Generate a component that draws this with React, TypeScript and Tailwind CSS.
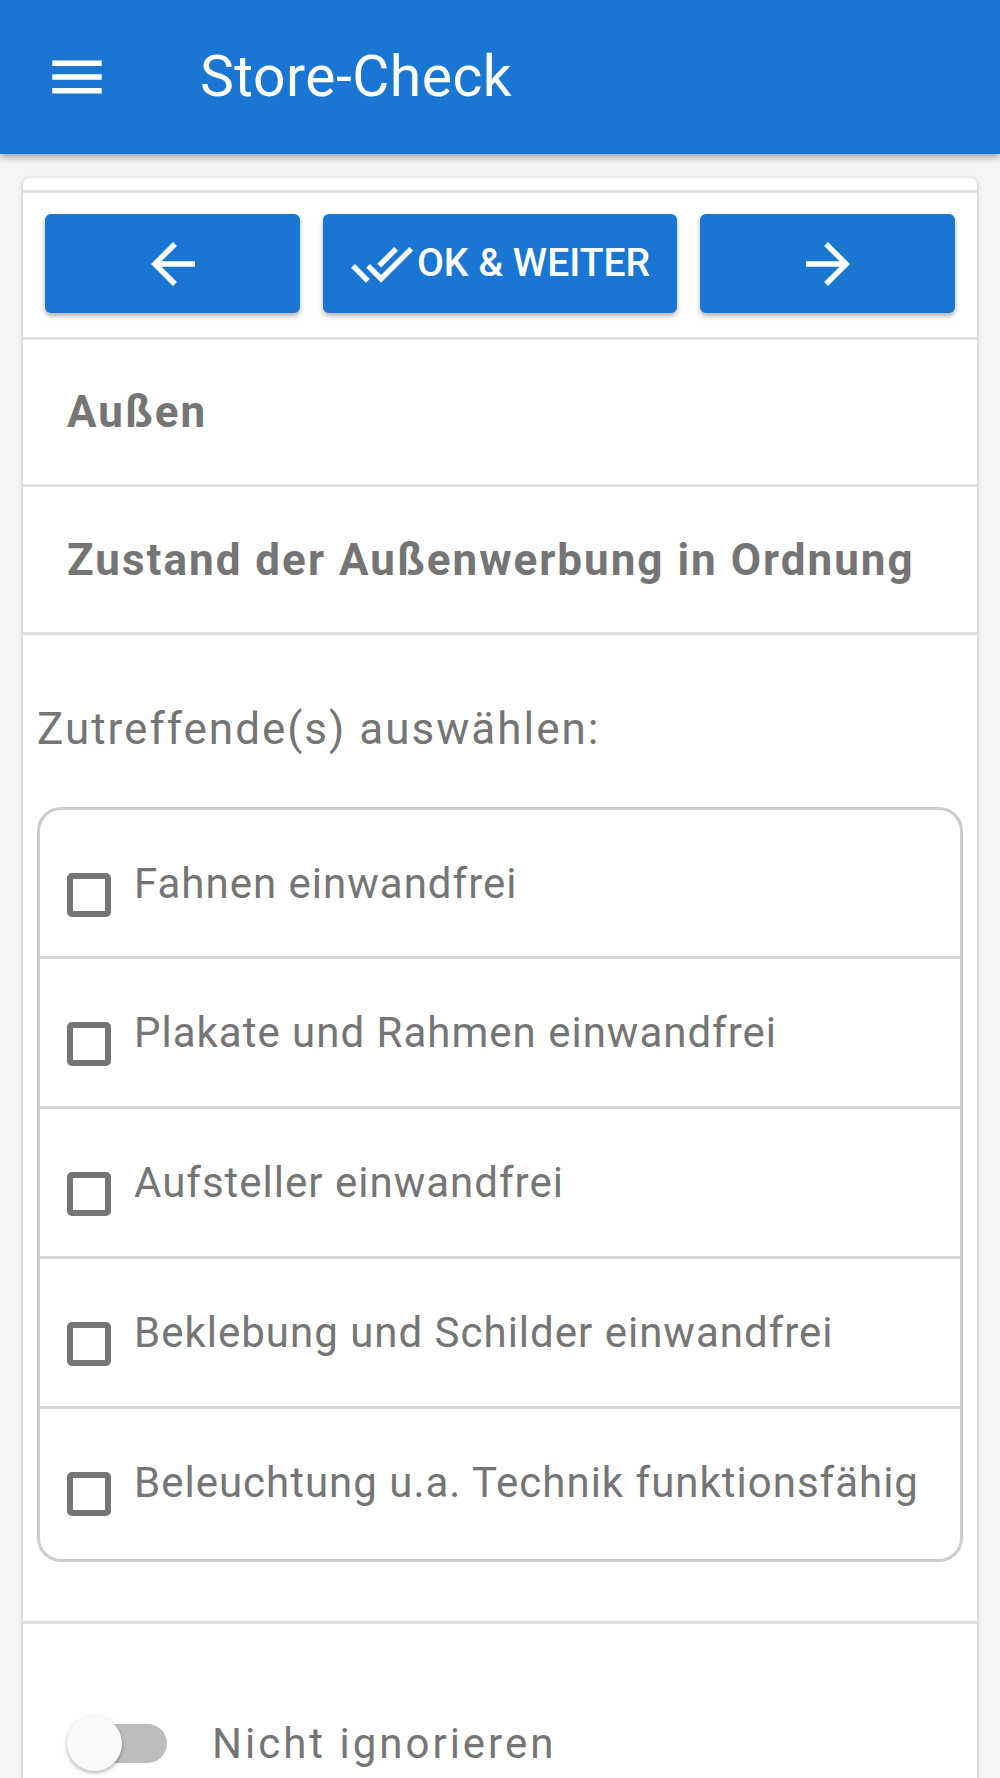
import React from "react";

const options = [
  "Fahnen einwandfrei",
  "Plakate und Rahmen einwandfrei",
  "Aufsteller einwandfrei",
  "Beklebung und Schilder einwandfrei",
  "Beleuchtung u.a. Technik funktionsfähig",
];

function MenuIcon() {
  return (
    <svg viewBox="0 0 24 24" className="w-[66px] h-[66px] fill-white">
      <path d="M3 18h18v-2H3v2zm0-5h18v-2H3v2zm0-7v2h18V6H3z" />
    </svg>
  );
}

function ArrowBack() {
  return (
    <svg viewBox="0 0 24 24" className="w-[66px] h-[66px] fill-white">
      <path d="M20 11H7.83l5.59-5.59L12 4l-8 8 8 8 1.41-1.41L7.83 13H20v-2z" />
    </svg>
  );
}

function ArrowForward() {
  return (
    <svg viewBox="0 0 24 24" className="w-[66px] h-[66px] fill-white">
      <path d="M12 4l-1.41 1.41L16.17 11H4v2h12.17l-5.58 5.59L12 20l8-8z" />
    </svg>
  );
}

function DoneAll() {
  return (
    <svg viewBox="0 0 24 24" className="w-[64px] h-[64px] fill-white shrink-0">
      <path d="M18 7l-1.41-1.41-6.34 6.34 1.41 1.41L18 7zm4.24-1.41L11.66 16.17 7.48 12l-1.41 1.41L11.66 19l12-12-1.42-1.41zM.41 13.41L6 19l1.41-1.41L1.83 12 .41 13.41z" />
    </svg>
  );
}

export default function App() {
  return (
    <div className="min-h-[1778px] w-full bg-[#f5f5f5] font-['Roboto',sans-serif] overflow-hidden">
      <header className="relative z-10 h-[154px] bg-[#1976d2] flex items-center shadow-[0_3px_7px_rgba(0,0,0,0.35)]">
        <div className="ml-[44px]">
          <MenuIcon />
        </div>
        <h1 className="ml-[90px] text-[57px] text-white font-normal tracking-[0.5px]">Store-Check</h1>
      </header>

      <main className="px-[23px] pt-[24px]">
        <div className="bg-white rounded-[6px] shadow-[0_1px_4px_rgba(0,0,0,0.25)]">
          <div className="h-[15px] border-b-[3px] border-[#e0e0e0]" />

          {/* navigation */}
          <div className="flex gap-[23px] px-[22px] pt-[21px] pb-[24px] border-b-[3px] border-[#e0e0e0]">
            <button className="w-[255px] h-[99px] bg-[#1976d2] rounded-[6px] flex items-center justify-center shadow-[0_3px_5px_rgba(0,0,0,0.3)]">
              <ArrowBack />
            </button>
            <button className="w-[354px] h-[99px] bg-[#1976d2] rounded-[6px] flex items-center justify-center shadow-[0_3px_5px_rgba(0,0,0,0.3)] text-white text-[39px] font-medium">
              <DoneAll />
              <span className="ml-[3px]">OK &amp; WEITER</span>
            </button>
            <button className="w-[255px] h-[99px] bg-[#1976d2] rounded-[6px] flex items-center justify-center shadow-[0_3px_5px_rgba(0,0,0,0.3)]">
              <ArrowForward />
            </button>
          </div>

          <div className="h-[147px] flex items-center pl-[44px] border-b-[3px] border-[#e0e0e0] text-[44px] font-bold text-[#757575] tracking-[2px]">
            Außen
          </div>
          <div className="h-[148px] flex items-center pl-[44px] border-b-[3px] border-[#e0e0e0] text-[44px] font-bold text-[#757575] tracking-[2px]">
            Zustand der Außenwerbung in Ordnung
          </div>

          {/* question */}
          <div className="px-[14px] pt-[68px] pb-[59px] border-b-[3px] border-[#e0e0e0]">
            <p className="text-[44px] leading-[52px] text-[#757575] tracking-[2px]">Zutreffende(s) auswählen:</p>
            <div className="mt-[52px] border-[3px] border-[#cccccc] rounded-[24px]">
              {options.map((o, i) => (
                <label
                  key={o}
                  className={`flex items-start pl-[27px] ${
                    i === 0
                      ? "h-[149px] border-b-[3px] border-[#d6d6d6]"
                      : i < options.length - 1
                      ? "h-[150px] border-b-[3px] border-[#d6d6d6]"
                      : "h-[150px]"
                  }`}
                >
                  <span className="mt-[63px] w-[44px] h-[44px] shrink-0 border-[6px] border-[#757575] rounded-[5px]" />
                  <span className="mt-[48px] ml-[23px] text-[42px] leading-[52px] text-[#757575] tracking-[1px]">{o}</span>
                </label>
              ))}
            </div>
          </div>

          {/* ignore toggle */}
          <div className="flex items-center pl-[44px] pt-[92px] pb-[40px]">
            <div className="relative w-[100px] h-[56px] shrink-0">
              <div className="absolute left-[6px] top-[8px] w-[94px] h-[39px] rounded-full bg-[#bdbdbd]" />
              <div className="absolute left-0 top-0 w-[55px] h-[55px] rounded-full bg-[#fafafa] shadow-[0_2px_4px_rgba(0,0,0,0.3)]" />
            </div>
            <span className="ml-[45px] text-[42px] leading-[52px] text-[#757575] tracking-[3px]">Nicht ignorieren</span>
          </div>
        </div>
      </main>
    </div>
  );
}
